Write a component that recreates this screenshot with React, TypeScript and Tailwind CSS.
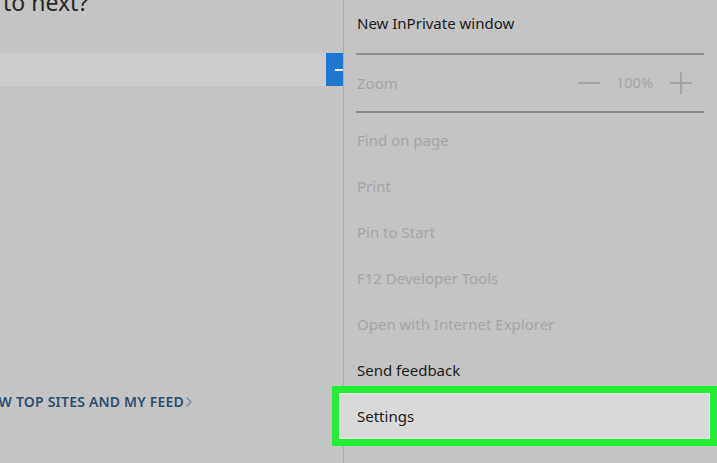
const FONT = { fontFamily: '"Noto Sans", "Open Sans", sans-serif' };

const MENU_ITEMS: { label: string; disabled: boolean }[] = [
  { label: "Find on page", disabled: true },
  { label: "Print", disabled: true },
  { label: "Pin to Start", disabled: true },
  { label: "F12 Developer Tools", disabled: true },
  { label: "Open with Internet Explorer", disabled: true },
  { label: "Send feedback", disabled: false },
];

function Separator() {
  return <div className="ml-[12px] mr-[13px] h-[2px] bg-[#8e8e8e]" />;
}

export default function App() {
  return (
    <div
      className="flex h-[463px] w-[717px] overflow-hidden bg-[#c4c4c4] text-[#1b1b1b]"
      style={FONT}
    >
      {/* page behind the menu */}
      <div className="flex w-[344px] shrink-0 flex-col border-r border-[#acacac]">
        <div className="mt-[-13px] pl-[3px] text-[23px] leading-[30px] text-[#262626]">
          to next?
        </div>
        <div className="mt-[36px] flex h-[33px]">
          <div className="flex-1 bg-[#cccccc]" />
          <div className="flex w-[17px] items-center justify-end bg-[#1f77d2]">
            <div className="h-[2px] w-[8px] bg-[#e8eef8]" />
          </div>
        </div>
        <div className="mt-[305px] flex items-center">
          <div className="flex w-[184px] justify-end overflow-hidden whitespace-nowrap text-[14px] font-semibold tracking-[0.2px] text-[#2c4f6e]">
            SHOW TOP SITES AND MY FEED
          </div>
          <svg width="8" height="12" viewBox="0 0 8 12" className="ml-[1px]">
            <path d="M1.5 1.5 L6 6 L1.5 10.5" fill="none" stroke="#7d8c99" strokeWidth="1.3" />
          </svg>
        </div>
      </div>

      {/* settings menu */}
      <div className="flex min-w-0 flex-1 flex-col">
        <div className="flex h-[46px] items-center pl-[13px] text-[15px]">
          New InPrivate window
        </div>
        <div className="mt-[7px]">
          <Separator />
        </div>
        <div className="flex h-[56px] items-center pl-[13px] pr-[25px] text-[15px] text-[#a6a6a6]">
          <span className="flex-1">Zoom</span>
          <svg width="22" height="22" viewBox="0 0 22 22">
            <line x1="0" y1="11" x2="22" y2="11" stroke="#9c9c9c" strokeWidth="1.5" />
          </svg>
          <span className="ml-[16px] w-[40px] text-[14.5px]">100%</span>
          <svg width="22" height="22" viewBox="0 0 22 22" className="ml-[14px]">
            <line x1="0" y1="11" x2="22" y2="11" stroke="#9c9c9c" strokeWidth="1.5" />
            <line x1="11" y1="0" x2="11" y2="22" stroke="#9c9c9c" strokeWidth="1.5" />
          </svg>
        </div>
        <Separator />
        <div className="mt-[4px] flex flex-col">
          {MENU_ITEMS.map((item) => (
            <div
              key={item.label}
              className={`flex h-[46px] items-center pl-[13px] text-[15px] ${
                item.disabled ? "text-[#a6a6a6]" : "text-[#1b1b1b]"
              }`}
            >
              {item.label}
            </div>
          ))}
          <div className="ml-[-12px] mt-[-7px] h-[60px] border-[7px] border-[#22ee33] bg-[#d9d9d9]">
            <div className="flex h-full items-center border border-[#ececec] pl-[17px] text-[15px]">
              Settings
            </div>
          </div>
        </div>
      </div>
    </div>
  );
}
